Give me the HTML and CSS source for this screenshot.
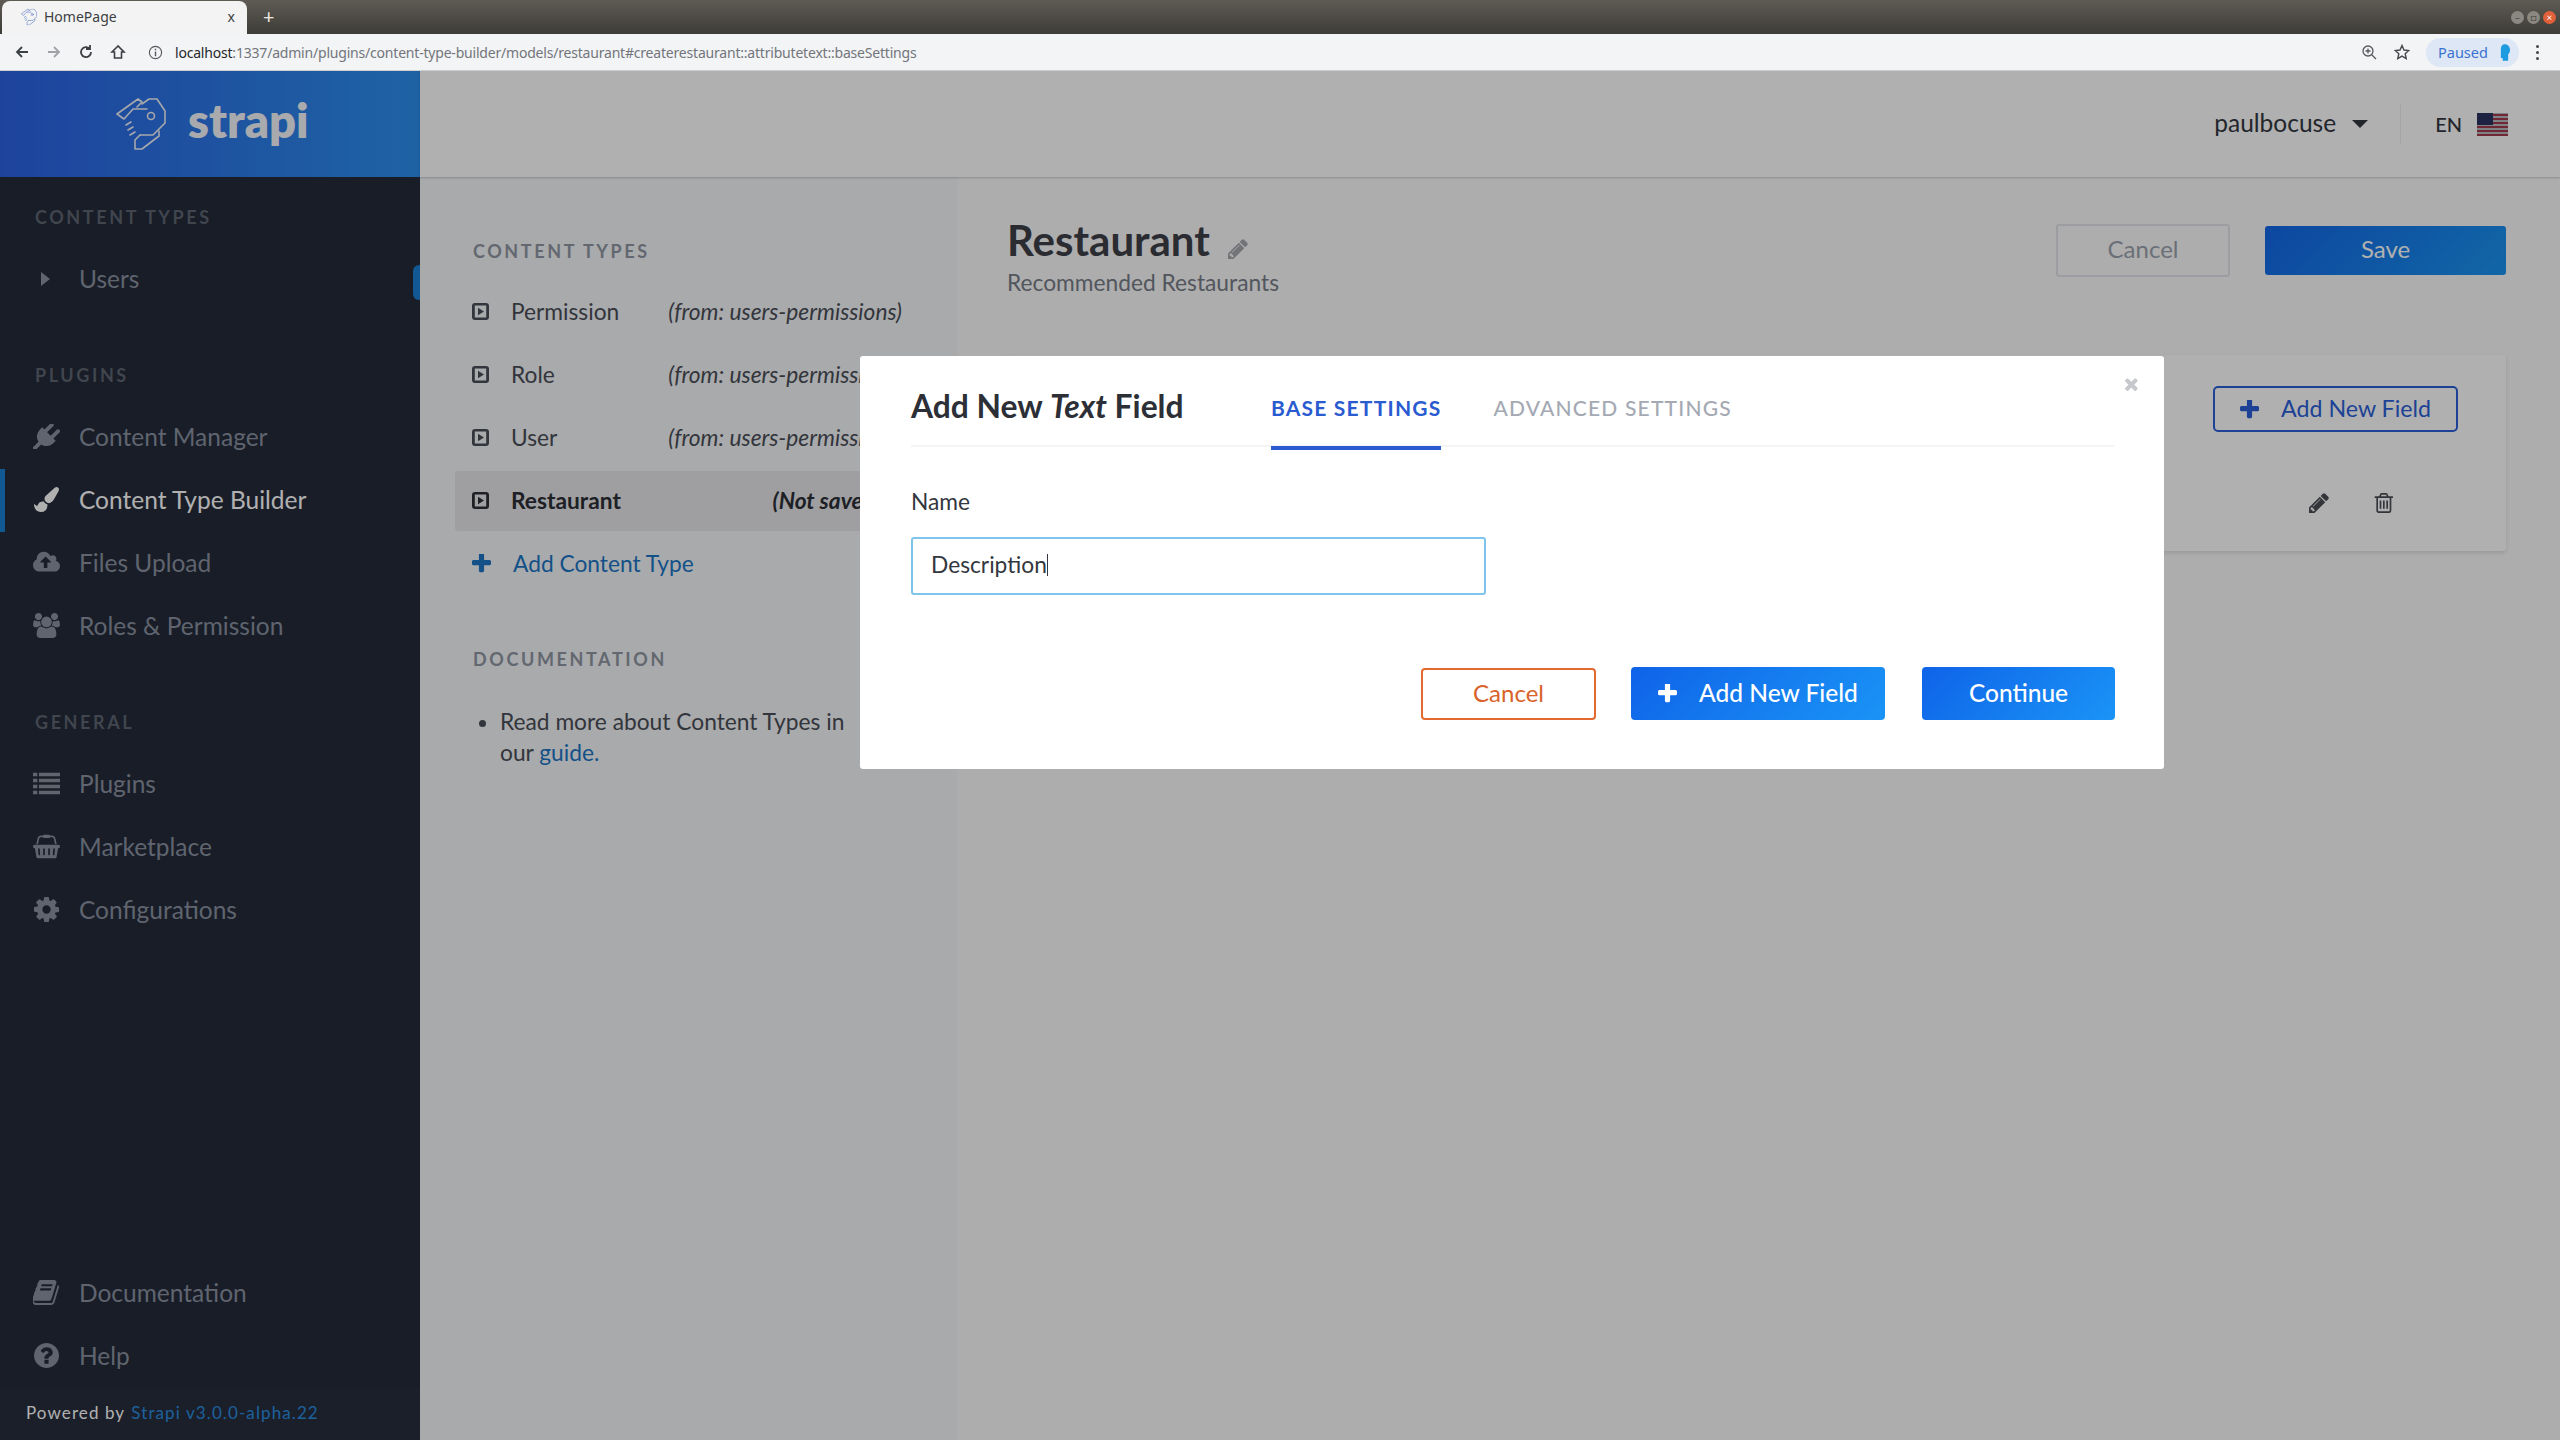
FILE: index.html
```html
<!DOCTYPE html>
<html lang="en">
<head>
    <meta charset="UTF-8">
    <title>HomePage</title>
    <link rel="stylesheet" href="styles.css">
</head>
<body>
    <svg class="sprite" xmlns="http://www.w3.org/2000/svg">
        <symbol id="i-plus" viewBox="192 192 1408 1408"><path d="M1600 736v192q0 40-28 68t-68 28h-416v416q0 40-28 68t-68 28h-192q-40 0-68-28t-28-68v-416h-416q-40 0-68-28t-28-68v-192q0-40 28-68t68-28h416v-416q0-40 28-68t68-28h192q40 0 68 28t28 68v416h416q40 0 68 28t28 68z"/></symbol>
        <symbol id="i-times" viewBox="238 238 1252 1316"><path d="M1490 1322q0 40-28 68l-136 136q-28 28-68 28t-68-28l-294-294-294 294q-28 28-68 28t-68-28l-136-136q-28-28-28-68t28-68l294-294-294-294q-28-28-28-68t28-68l136-136q28-28 68-28t68 28l294 294 294-294q28-28 68-28t68 28l136 136q28 28 28 68t-28 68l-294 294 294 294q28 28 28 68z"/></symbol>
        <symbol id="i-pencil" viewBox="128 128 1536 1536"><path d="M491 1536l91-91-235-235-91 91v107h128v128h107zm523-928q0-22-22-22-10 0-17 7l-542 542q-7 7-7 17 0 22 22 22 10 0 17-7l542-542q7-7 7-17zm-54-192l416 416-832 832h-416v-416zm683 96q0 53-37 90l-166 166-416-416 166-165q36-38 90-38 53 0 91 38l235 234q37 39 37 91z"/></symbol>
        <symbol id="i-trash" viewBox="128 128 1408 1536"><path d="M704 736v576q0 14-9 23t-23 9h-64q-14 0-23-9t-9-23v-576q0-14 9-23t23-9h64q14 0 23 9t9 23zm256 0v576q0 14-9 23t-23 9h-64q-14 0-23-9t-9-23v-576q0-14 9-23t23-9h64q14 0 23 9t9 23zm256 0v576q0 14-9 23t-23 9h-64q-14 0-23-9t-9-23v-576q0-14 9-23t23-9h64q14 0 23 9t9 23zm128 724v-948h-896v948q0 22 7 40.5t14.5 27 10.5 8.5h832q3 0 10.5-8.5t14.5-27 7-40.5zm-672-1076h448l-48-117q-7-9-17-11h-317q-10 2-17 11zm928 32v64q0 14-9 23t-23 9h-96v948q0 83-47 143.5t-113 60.5h-832q-66 0-113-58.5t-47-141.5v-952h-96q-14 0-23-9t-9-23v-64q0-14 9-23t23-9h309l70-167q15-37 54-63t79-26h320q40 0 79 26t54 63l70 167h309q14 0 23 9t9 23z"/></symbol>
        <symbol id="i-plug" viewBox="0 128 1792 1536"><path d="M1755 453q37 38 37 90.5t-37 90.5l-401 400 150 150-160 160q-163 163-389.5 186.5t-411.5-100.5l-362 362h-181v-181l362-362q-124-185-100.5-411.5t186.5-389.5l160-160 150 150 400-401q38-37 91-37t90 37 37 90.5-37 90.5l-400 401 234 234 401-400q38-37 91-37t90 37z"/></symbol>
        <symbol id="i-brush" viewBox="0 0 1792 1792"><path d="M1615 0q70 0 122.5 46.5t52.5 116.5q0 63-45 151-332 629-465 752-97 91-218 91-126 0-216.5-92.5t-90.5-219.5q0-128 92-212l638-579q59-54 130-54zm-909 1034q39 76 106.5 130t150.5 76l1 71q4 213-129.5 347t-348.5 134q-123 0-218-46.5t-152.5-127.5-86.5-183-29-220q7 5 41 30t62 44.5 59 36.5 46 17q41 0 55-37 25-66 57.5-112.5t69.5-76 88-47.5 103-25.5 125-10.5z"/></symbol>
        <symbol id="i-cloud" viewBox="0 256 1920 1280"><path d="M1280 864q0-14-9-23l-352-352q-9-9-23-9t-23 9l-351 351q-10 12-10 24 0 14 9 23t23 9h224v352q0 13 9.5 22.5t22.5 9.5h192q13 0 22.5-9.5t9.5-22.5v-352h224q13 0 22.5-9.5t9.5-22.5zm640 288q0 159-112.5 271.5t-271.5 112.5h-1088q-185 0-316.5-131.5t-131.5-316.5q0-130 70-240t188-165q-2-30-2-43 0-212 150-362t362-150q156 0 285.5 87t188.5 231q71-62 166-62 106 0 181 75t75 181q0 76-41 138 130 31 213.5 135.5t83.5 238.5z"/></symbol>
        <symbol id="i-users" viewBox="0 0 1920 1792"><path d="M593 896q-162 5-265 128h-134q-82 0-138-40.5t-56-118.5q0-353 124-353 6 0 43.5 21t97.5 42.5 119 21.5q67 0 133-23-5 37-5 66 0 139 81 256zm1071 637q0 120-73 189.5t-194 69.5h-874q-121 0-194-69.5t-73-189.5q0-53 3.5-103.5t14-109 26.5-108.5 43-97.5 62-81 85.5-53.5 111.5-20q10 0 43 21.5t73 48 107 48 135 21.5 135-21.5 107-48 73-48 43-21.5q61 0 111.5 20t85.5 53.5 62 81 43 97.5 26.5 108.5 14 109 3.5 103.5zm-1024-1277q0 106-75 181t-181 75-181-75-75-181 75-181 181-75 181 75 75 181zm704 384q0 159-112.5 271.5t-271.5 112.5-271.5-112.5-112.5-271.5 112.5-271.5 271.5-112.5 271.5 112.5 112.5 271.5zm576 225q0 78-56 118.5t-138 40.5h-134q-103-123-265-128 81-117 81-256 0-29-5-66 66 23 133 23 59 0 119-21.5t97.5-42.5 43.5-21q124 0 124 353zm-128-609q0 106-75 181t-181 75-181-75-75-181 75-181 181-75 181 75 75 181z"/></symbol>
        <symbol id="i-list" viewBox="0 0 25 20"><path d="M0 0h4v3.2H0zM0 5.6h4v3.2H0zM0 11.2h4v3.2H0zM0 16.8h4V20H0zM5.5 0H25v3.2H5.5zM5.5 5.6H25v3.2H5.5zM5.5 11.2H25v3.2H5.5zM5.5 16.8H25V20H5.5z"/></symbol>
        <symbol id="i-basket" viewBox="0 0 2048 1792"><path d="M1920 768q53 0 90.5 37.5t37.5 90.5-37.5 90.5-90.5 37.5h-15l-115 662q-8 46-44 76t-82 30h-1280q-46 0-82-30t-44-76l-115-662h-15q-53 0-90.5-37.5t-37.5-90.5 37.5-90.5 90.5-37.5h1792zm-1435 800q26-2 43.5-22.5t15.5-46.5l-32-416q-2-26-22.5-43.5t-46.5-15.5-43.5 22.5-15.5 46.5l32 416q2 25 20.5 42t43.5 17h5zm411-64v-416q0-26-19-45t-45-19-45 19-19 45v416q0 26 19 45t45 19 45-19 19-45zm384 0v-416q0-26-19-45t-45-19-45 19-19 45v416q0 26 19 45t45 19 45-19 19-45zm352 5l32-416q2-26-15.5-46.5t-43.5-22.5-46.5 15.5-22.5 43.5l-32 416q-2 26 15.5 46.5t43.5 22.5h5q25 0 43.5-17t20.5-42zm-1156-1217l-93 412h-132l101-441q19-88 89-143.5t160-55.5h167q0-26 19-45t45-19h384q26 0 45 19t19 45h167q90 0 160 55.5t89 143.5l101 441h-132l-93-412q-11-44-45.5-72t-79.5-28h-167q0 26-19 45t-45 19h-384q-26 0-45-19t-19-45h-167q-45 0-79.5 28t-45.5 72z"/></symbol>
        <symbol id="i-cog" viewBox="128 128 1536 1536"><path d="M1152 896q0-106-75-181t-181-75-181 75-75 181 75 181 181 75 181-75 75-181zm512-109v222q0 12-8 23t-20 13l-185 28q-19 54-39 91 35 50 107 138 10 12 10 25t-9 23q-27 37-99 108t-94 71q-12 0-26-9l-138-108q-44 23-91 38-16 136-29 186-7 28-36 28h-222q-14 0-24.5-8.5t-11.5-21.5l-28-184q-49-16-90-37l-141 107q-10 9-25 9-14 0-25-11-126-114-165-168-7-10-7-23 0-12 8-23 15-21 51-66.5t54-70.5q-27-50-41-99l-183-27q-13-2-21-12.5t-8-23.5v-222q0-12 8-23t19-13l186-28q14-46 39-92-40-57-107-138-10-12-10-24 0-10 9-23 26-36 98.5-107.5t94.5-71.5q13 0 26 10l138 107q44-23 91-38 16-136 29-186 7-28 36-28h222q14 0 24.5 8.5t11.5 21.5l28 184q49 16 90 37l142-107q9-9 24-9 13 0 25 10 129 119 165 170 7 8 7 22 0 12-8 23-15 21-51 66.5t-54 70.5q26 50 41 98l183 28q13 2 21 12.5t8 23.5z"/></symbol>
        <symbol id="i-book" viewBox="128 128 1536 1536"><path d="M1639 478q40 57 18 129l-275 906q-19 64-76.5 107.5t-122.5 43.5h-923q-77 0-148.5-53.5t-99.5-131.5q-24-67-2-127 0-4 3-27t4-37q1-8-3-21.5t-3-19.5q2-11 8-21t16.5-23.5 16.5-23.5q23-38 45-91.5t30-91.5q3-10 .5-30t-.5-28q3-11 17-28t17-23q21-36 42-92t25-90q1-9-2.5-32t.5-28q4-13 22-30.5t22-22.5q19-26 42.5-84.5t27.5-96.5q1-8-3-25.5t-2-26.5q2-8 9-18t18-23 17-21q8-12 16.5-30.5t15-35 16-36 19.5-32 26.5-23.5 36-11.5 47.5 5.5l-1 3q38-9 51-9h761q74 0 114 56t18 130l-274 906q-36 119-71.5 153.5t-128.5 34.5h-869q-27 0-38 15-11 16-1 43 24 70 144 70h923q29 0 56-15.5t35-41.5l300-987q7-22 5-57 38 15 59 43zm-1064 2q-4 13 2 22.5t20 9.5h608q13 0 25.5-9.5t16.5-22.5l21-64q4-13-2-22.5t-20-9.5h-608q-13 0-25.5 9.5t-16.5 22.5zm-83 256q-4 13 2 22.5t20 9.5h608q13 0 25.5-9.5t16.5-22.5l21-64q4-13-2-22.5t-20-9.5h-608q-13 0-25.5 9.5t-16.5 22.5z"/></symbol>
        <symbol id="i-help" viewBox="128 128 1536 1536"><path d="M1024 1376v-192q0-14-9-23t-23-9h-192q-14 0-23 9t-9 23v192q0 14 9 23t23 9h192q14 0 23-9t9-23zm256-672q0-88-55.5-163t-138.5-116-170-41q-243 0-371 213-15 24 8 42l132 100q7 6 19 6 16 0 25-12 53-68 86-92 34-24 86-24 48 0 85.5 26t37.5 59q0 38-20 61t-68 45q-63 28-115.5 86.5t-52.5 125.5v36q0 14 9 23t23 9h192q14 0 23-9t9-23q0-19 21.5-49.5t54.5-49.5q32-18 49-28.5t46-35 44.5-48 28-60.5 12.5-81zm384 192q0 209-103 385.5t-279.5 279.5-385.5 103-385.5-103-279.5-279.5-103-385.5 103-385.5 279.5-279.5 385.5-103 385.5 103 279.5 279.5 103 385.5z"/></symbol>
        <symbol id="i-type" viewBox="0 0 17 17"><path fill-rule="evenodd" d="M3 0h11a3 3 0 0 1 3 3v11a3 3 0 0 1-3 3H3a3 3 0 0 1-3-3V3a3 3 0 0 1 3-3zm-.2 2.600v11.800h11.400V2.600zM6 4.800l6 3.700-6 3.700z"/></symbol>
        <symbol id="i-logo" viewBox="0 0 50 52"><g fill="none" stroke="currentColor" stroke-width="1.6" stroke-linejoin="round" stroke-linecap="round"><path d="M22 1L1 16l7 5 9-10h14M22 1l4 3-5 5"/><path d="M26 6l7-5h8l8 12v12L37 37H24"/><circle cx="35" cy="18" r="3.500"/><path d="M24 37l-5 5v9h7l17-13v-5"/><path d="M10 27l5-3M12 32l5-3M14 37l5-3"/></g></symbol>
    </svg>

    <div class="tabbar">
        <div class="tab">
            <svg class="tab-icon" viewBox="0 0 50 52"><use href="#i-logo"/></svg>
            <span class="tab-title">HomePage</span>
            <span class="tab-close">x</span>
        </div>
        <span class="tab-new">+</span>
        <div class="window-btns">
            <span class="win-btn">&#8211;</span>
            <span class="win-btn">&#9633;</span>
            <span class="win-btn win-close">&#215;</span>
        </div>
    </div>

    <div class="toolbar">
        <svg class="nav-icon" viewBox="0 0 16 16"><path d="M14 8H3M8 3L3 8l5 5" fill="none" stroke="#3c3f43" stroke-width="1.8"/></svg>
        <svg class="nav-icon" viewBox="0 0 16 16"><path d="M2 8h11M8 3l5 5-5 5" fill="none" stroke="#a0a2a5" stroke-width="1.8"/></svg>
        <svg class="nav-icon" viewBox="0 0 16 16"><path d="M13 8a5 5 0 1 1-1.500-3.500M12 1v4H8" fill="none" stroke="#3c3f43" stroke-width="1.8"/></svg>
        <svg class="nav-icon" viewBox="0 0 16 16"><path d="M8 2L2 8h2.500v6h7V8H14z" fill="none" stroke="#3c3f43" stroke-width="1.6"/></svg>
        <div class="url">
            <svg class="url-info" viewBox="0 0 16 16"><circle cx="8" cy="8" r="6.500" fill="none" stroke="#55585c" stroke-width="1.2"/><path d="M8 7v5M8 4v1.600" stroke="#55585c" stroke-width="1.5"/></svg>
            <span class="url-host">localhost</span><span class="url-rest">:1337/admin/plugins/content-type-builder/models/restaurant#createrestaurant::attributetext::baseSettings</span>
        </div>
        <svg class="tool-icon" viewBox="0 0 16 16"><circle cx="7" cy="7" r="5" fill="none" stroke="#55585c" stroke-width="1.3"/><path d="M10.500 10.500L15 15M7 4.500v5M4.500 7h5" stroke="#55585c" stroke-width="1.3"/></svg>
        <svg class="tool-icon" viewBox="0 0 16 16"><path d="M8 1.500l2 4.500 4.800.5-3.600 3.200 1 4.800L8 12.100l-4.200 2.400 1-4.800L1.200 6.500 6 6z" fill="none" stroke="#45484c" stroke-width="1.4"/></svg>
        <div class="paused">
            <span>Paused</span>
            <svg class="paused-icon" viewBox="0 0 12 18"><path d="M6 0c4 0 6 3 6 6 0 3-1 4-2 5v7H4v-3H2V5c0-3 2-5 4-5z" fill="#1d9be0"/></svg>
        </div>
        <div class="kebab"><i></i><i></i><i></i></div>
    </div>

    <div class="app">
        <aside class="sidebar">
            <div class="brand">
                <svg class="brand-icon"><use href="#i-logo"/></svg>
                <span class="brand-name">strapi</span>
            </div>
            <nav class="nav">
                <h3 class="nav-heading">Content Types</h3>
                <a class="nav-item">
                    <span class="nav-caret"></span>
                    Users
                </a>
                <span class="nav-handle"></span>

                <h3 class="nav-heading nav-gap">Plugins</h3>
                <a class="nav-item"><svg class="nav-svg"><use href="#i-plug"/></svg>Content Manager</a>
                <a class="nav-item active"><svg class="nav-svg"><use href="#i-brush"/></svg>Content Type Builder</a>
                <a class="nav-item"><svg class="nav-svg"><use href="#i-cloud"/></svg>Files Upload</a>
                <a class="nav-item"><svg class="nav-svg"><use href="#i-users"/></svg>Roles &amp; Permission</a>

                <h3 class="nav-heading nav-gap">General</h3>
                <a class="nav-item"><svg class="nav-svg"><use href="#i-list"/></svg>Plugins</a>
                <a class="nav-item"><svg class="nav-svg"><use href="#i-basket"/></svg>Marketplace</a>
                <a class="nav-item"><svg class="nav-svg"><use href="#i-cog"/></svg>Configurations</a>

                <div class="nav-bottom">
                    <a class="nav-item"><svg class="nav-svg"><use href="#i-book"/></svg>Documentation</a>
                    <a class="nav-item"><svg class="nav-svg"><use href="#i-help"/></svg>Help</a>
                </div>
            </nav>
            <div class="powered">Powered by <span class="powered-link">Strapi v3.0.0-alpha.22</span></div>
        </aside>

        <div class="main">
            <header class="topbar">
                <span class="user">paulbocuse</span>
                <span class="user-caret"></span>
                <span class="topbar-sep"></span>
                <span class="lang">EN</span>
                <svg class="flag" viewBox="0 0 31 23">
                    <rect width="31" height="23" fill="#b8bcc4"/>
                    <path d="M0 1h31v2H0zM0 5h31v2H0zM0 9h31v2H0zM0 13h31v2H0zM0 17h31v2H0zM0 21h31v2H0z" fill="#a23a4c"/>
                    <rect width="16" height="12" fill="#2b3160"/>
                </svg>
            </header>

            <div class="body">
                <section class="left-panel">
                    <h3 class="panel-heading">Content Types</h3>
                    <ul class="type-list">
                        <li class="type-row"><svg class="type-icon"><use href="#i-type"/></svg><span>Permission</span><em class="type-from">(from: users-permissions)</em></li>
                        <li class="type-row"><svg class="type-icon"><use href="#i-type"/></svg><span>Role</span><em class="type-from">(from: users-permissions)</em></li>
                        <li class="type-row"><svg class="type-icon"><use href="#i-type"/></svg><span>User</span><em class="type-from">(from: users-permissions)</em></li>
                        <li class="type-row current"><svg class="type-icon"><use href="#i-type"/></svg><span>Restaurant</span><em class="type-from">(Not saved)</em></li>
                    </ul>
                    <a class="add-type"><svg class="add-type-icon"><use href="#i-plus"/></svg>Add Content Type</a>
                    <h3 class="panel-heading doc-heading">Documentation</h3>
                    <ul class="doc-list">
                        <li>Read more about Content Types in our <a class="doc-link">guide.</a></li>
                    </ul>
                </section>

                <section class="content">
                    <div class="page-head">
                        <div>
                            <h1 class="page-title">Restaurant <svg class="title-pencil"><use href="#i-pencil"/></svg></h1>
                            <p class="page-sub">Recommended Restaurants</p>
                        </div>
                        <div class="page-actions">
                            <button class="btn btn-ghost">Cancel</button>
                            <button class="btn btn-save">Save</button>
                        </div>
                    </div>
                    <div class="card">
                        <button class="btn btn-outline"><svg class="btn-plus"><use href="#i-plus"/></svg>Add New Field</button>
                        <div class="row-actions">
                            <svg class="row-icon"><use href="#i-pencil"/></svg>
                            <svg class="row-icon"><use href="#i-trash"/></svg>
                        </div>
                    </div>
                </section>
            </div>
        </div>

        <div class="overlay">
            <div class="modal">
                <svg class="modal-close"><use href="#i-times"/></svg>
                <div class="modal-head">
                    <h2 class="modal-title">Add New <em>Text</em> Field</h2>
                    <span class="modal-tab selected">Base Settings</span>
                    <span class="modal-tab">Advanced Settings</span>
                </div>
                <label class="field-label" for="name">Name</label>
                <div class="field-input" id="name">Description<span class="cursor"></span></div>
                <div class="modal-actions">
                    <button class="btn btn-cancel">Cancel</button>
                    <button class="btn btn-primary btn-add"><svg class="btn-plus"><use href="#i-plus"/></svg>Add New Field</button>
                    <button class="btn btn-primary btn-continue">Continue</button>
                </div>
            </div>
        </div>
    </div>
</body>
</html>
```

FILE: styles.css
```css
* {
    box-sizing: border-box;
}

html, body {
    margin: 0;
    padding: 0;
    height: 100%;
    overflow: hidden;
}

body {
    display: flex;
    flex-direction: column;
    font-family: 'Lato', 'Open Sans', sans-serif;
    font-size: 22.75px;
    color: #3d4049;
    background-color: #fbfbfb;
    text-rendering: optimizeLegibility;
}

h1, h2, h3, p, ul {
    margin: 0;
    padding: 0;
}

svg {
    fill: currentColor;
}

.sprite {
    width: 0;
    height: 0;
    position: absolute;
}

/* browser chrome */
.tabbar {
    height: 34px;
    display: flex;
    align-items: flex-end;
    padding-left: 2px;
    background: linear-gradient(#5e5b54, #3e3c37);
}

.tab {
    width: 245px;
    height: 33px;
    display: flex;
    align-items: center;
    padding: 0 12px 2px 19px;
    border-radius: 8px 8px 0 0;
    background-color: #f3f3f3;
    color: #3c3f43;
    font-family: 'Noto Sans', sans-serif;
    font-size: 14px;
}

.tab-icon {
    width: 16px;
    height: 20px;
    color: #4468c0;
    margin-right: 7px;
}

.tab-close {
    margin-left: auto;
    font-size: 14px;
}

.tab-new {
    align-self: center;
    margin-left: 16px;
    color: #ece9e2;
    font-family: 'Noto Sans', sans-serif;
    font-size: 20px;
    line-height: 34px;
}

.window-btns {
    margin-left: auto;
    align-self: center;
    display: flex;
    gap: 3px;
    padding-right: 4px;
}

.win-btn {
    width: 13px;
    height: 13px;
    border-radius: 50%;
    background-color: #8a8880;
    color: #3e3c37;
    font-size: 10px;
    line-height: 13px;
    text-align: center;
}

.win-close {
    background-color: #e0603a;
    color: #fff;
}

.toolbar {
    height: 37px;
    display: flex;
    align-items: center;
    padding-left: 14px;
    background-color: #f3f4f6;
    border-bottom: 1px solid #cfcfcf;
    font-family: 'Noto Sans', sans-serif;
}

.nav-icon {
    width: 16px;
    height: 16px;
    margin-right: 16px;
}

.url {
    flex: 1;
    display: flex;
    align-items: center;
    margin-left: 6px;
    font-size: 14px;
    letter-spacing: -0.2px;
}

.url-info {
    width: 15px;
    height: 15px;
    margin-right: 12px;
}

.url-host {
    color: #26282b;
}

.url-rest {
    color: #72767b;
}

.tool-icon {
    width: 16px;
    height: 16px;
    margin-right: 17px;
}

.paused {
    width: 93px;
    height: 29px;
    display: flex;
    align-items: center;
    justify-content: space-between;
    padding: 0 9px 0 12px;
    margin-left: -1px;
    border-radius: 15px;
    background-color: #dde7f5;
    color: #3a72d0;
    font-size: 14.5px;
}

.paused-icon {
    width: 11px;
    height: 17px;
}

.kebab {
    display: flex;
    flex-direction: column;
    gap: 3px;
    margin: 0 21px 0 17px;
}

.kebab i {
    width: 3px;
    height: 3px;
    background-color: #45484c;
    border-radius: 50%;
}

/* app */
.app {
    flex: 1;
    min-height: 0;
    display: flex;
    position: relative;
}

.sidebar {
    width: 420px;
    flex-shrink: 0;
    display: flex;
    flex-direction: column;
    background-color: #242a39;
}

.brand {
    height: 106px;
    display: flex;
    align-items: center;
    padding-left: 116px;
    background: linear-gradient(to right, #2c62e4, #2c8fee);
    color: #fff;
}

.brand-icon {
    width: 50px;
    height: 52px;
    margin-right: 22px;
    color: #f0f2f8;
}

.brand-name {
    font-size: 47px;
    font-weight: 800;
    line-height: 1;
    margin-top: -8px;
    color: #f4f6fb;
}

.nav {
    flex: 1;
    position: relative;
    display: flex;
    flex-direction: column;
    padding-top: 26px;
}

.nav-heading {
    height: 28px;
    line-height: 28px;
    margin-bottom: 17px;
    padding-left: 35px;
    font-size: 18px;
    font-weight: 700;
    letter-spacing: 2.6px;
    text-transform: uppercase;
    color: #5e6571;
}

.nav-gap {
    margin-top: 50px;
}

.nav-item {
    height: 63px;
    display: flex;
    align-items: center;
    padding-left: 33px;
    padding-bottom: 2px;
    font-size: 24.5px;
    color: #8a92a1;
}

.nav-item.active {
    color: #fff;
    box-shadow: inset 5px 0 0 #1b82d6;
}

.nav-svg {
    width: 27px;
    height: 25px;
    margin-right: 19px;
    flex-shrink: 0;
}

.nav-caret {
    width: 0;
    height: 0;
    margin: 0 29px 0 8px;
    border-left: 9px solid currentColor;
    border-top: 7px solid transparent;
    border-bottom: 7px solid transparent;
}

.nav-handle {
    position: absolute;
    top: 88px;
    right: 0;
    width: 7px;
    height: 35px;
    border-radius: 6px 0 0 6px;
    background-color: #1b82d6;
}

.nav-bottom {
    margin-top: auto;
}

.powered {
    height: 52px;
    display: flex;
    align-items: center;
    gap: 1px;
    padding-left: 26px;
    padding-bottom: 4px;
    background-color: #272d3c;
    color: #fff;
    font-size: 17px;
    letter-spacing: 1.1px;
    white-space: pre;
}

.powered-link {
    color: #2a8de0;
}

.main {
    flex: 1;
    display: flex;
    flex-direction: column;
    min-width: 0;
}

.topbar {
    height: 106px;
    flex-shrink: 0;
    display: flex;
    align-items: center;
    justify-content: flex-end;
    padding-right: 52px;
    background-color: #fff;
    box-shadow: 0 1px 2px rgba(0, 0, 0, 0.2);
    position: relative;
    color: #333740;
}

.user {
    font-size: 24.5px;
    padding-bottom: 3px;
}

.user-caret {
    width: 0;
    height: 0;
    margin: 0 32px 0 16px;
    border-top: 8px solid currentColor;
    border-left: 8px solid transparent;
    border-right: 8px solid transparent;
}

.topbar-sep {
    width: 1px;
    height: 40px;
    margin-right: 34px;
    background-color: #f0f0f0;
}

.lang {
    font-size: 20px;
    font-weight: 500;
    margin-right: 15px;
}

.flag {
    width: 31px;
    height: 23px;
}

.body {
    flex: 1;
    display: flex;
    min-height: 0;
}

.left-panel {
    width: 537px;
    flex-shrink: 0;
    padding: 60px 38px 0 35px;
    background-color: #f5f6f9;
}

.panel-heading {
    height: 28px;
    line-height: 28px;
    margin-bottom: 17px;
    padding-left: 18px;
    font-size: 18px;
    font-weight: 700;
    letter-spacing: 2.6px;
    text-transform: uppercase;
    color: #9097a3;
}

.type-list {
    list-style: none;
    display: flex;
    flex-direction: column;
    gap: 3px;
}

.type-row {
    height: 60px;
    width: 464px;
    display: flex;
    align-items: center;
    padding: 0 17px 2px;
    border-radius: 3px;
    white-space: nowrap;
    color: #4a4e57;
}

.type-row.current {
    background-color: #e6e7ea;
    font-weight: 700;
    color: #2c2f36;
}

.type-row.current .type-from {
    margin-right: 21px;
}

.type-icon {
    width: 17px;
    height: 17px;
    margin-right: 22px;
    flex-shrink: 0;
}

.type-from {
    margin-left: auto;
    font-style: italic;
}

.add-type {
    height: 60px;
    display: flex;
    align-items: center;
    padding-left: 17px;
    padding-bottom: 2px;
    margin-top: 3px;
    color: #1c76c6;
}

.add-type-icon {
    width: 19px;
    height: 19px;
    margin-right: 22px;
}

.doc-heading {
    margin-top: 51px;
    margin-bottom: 33px;
}

.doc-list {
    width: 390px;
    padding-left: 45px;
    line-height: 31px;
    color: #4a4e57;
}

.doc-link {
    color: #1c76c6;
}

.content {
    flex: 1;
    padding: 38px 54px 0 50px;
    min-width: 0;
}

.page-head {
    display: flex;
    justify-content: space-between;
    align-items: flex-start;
}

.page-title {
    font-size: 42px;
    font-weight: 700;
    line-height: 50px;
    color: #3d4049;
}

.title-pencil {
    width: 20px;
    height: 20px;
    margin-left: 8px;
    color: #a5a8ae;
    vertical-align: -3px;
}

.page-sub {
    margin-top: 3px;
    font-size: 22.75px;
    line-height: 30px;
    color: #787d88;
}

.page-actions {
    display: flex;
    align-items: center;
    gap: 35px;
    margin-top: 9px;
}

.btn {
    display: flex;
    align-items: center;
    justify-content: center;
    font-family: inherit;
    font-size: 24px;
    border: none;
    border-radius: 3px;
    padding: 0 0 3px;
}

.btn-ghost {
    width: 174px;
    height: 53px;
    padding-bottom: 5px;
    border: 2px solid #e2e4e9;
    background: transparent;
    color: #9ba2ae;
}

.btn-save {
    width: 241px;
    height: 49px;
    padding-bottom: 5px;
    background: linear-gradient(135deg, #1367e8, #1a95f2);
    color: #fff;
}

.card {
    margin-top: 57px;
    height: 196px;
    display: flex;
    flex-direction: column;
    align-items: flex-end;
    padding: 31px 48px 0 0;
    border-radius: 3px;
    background-color: #fff;
    box-shadow: 0 2px 4px rgba(0, 0, 0, 0.12);
}

.btn-outline {
    width: 245px;
    height: 46px;
    border: 2px solid #2a60d8;
    border-radius: 5px;
    background: transparent;
    color: #2a60d8;
    font-size: 23.2px;
}

.btn-plus {
    width: 19px;
    height: 19px;
    margin-right: 22px;
    margin-top: 3px;
}

.row-actions {
    display: flex;
    gap: 44px;
    margin-top: 61px;
    margin-right: 65px;
}

.row-icon {
    width: 20px;
    height: 20px;
    color: #4a4d54;
}

/* dimmed layer and dialog */
.overlay {
    position: absolute;
    inset: 0;
    padding: 285px 0 0 860px;
    background-color: rgba(0, 0, 0, 0.31);
}

.modal {
    position: relative;
    width: 1304px;
    height: 413px;
    padding: 0 49px 0 51px;
    border-radius: 3px;
    background-color: #fff;
}

.modal-close {
    position: absolute;
    top: 21px;
    right: 26px;
    width: 14px;
    height: 14px;
    color: #c6c8cc;
}

.modal-head {
    height: 91px;
    display: flex;
    align-items: flex-end;
    border-bottom: 2px solid #f4f4f4;
    margin-right: 1px;
}

.modal-title {
    width: 360px;
    align-self: flex-start;
    margin-top: 30px;
    font-size: 31.8px;
    font-weight: 700;
    line-height: 40px;
    color: #2c2f36;
}

.modal-title em {
    font-style: italic;
}

.modal-tab {
    height: 57px;
    margin-right: 52px;
    margin-bottom: -5px;
    font-size: 21px;
    font-weight: 500;
    letter-spacing: 1.2px;
    line-height: 30px;
    text-transform: uppercase;
    color: #a4a9b3;
}

.modal-tab.selected {
    font-weight: 700;
    color: #2a5bd0;
    border-bottom: 4px solid #2a5bd0;
}

.field-label {
    display: block;
    margin-top: 40px;
    font-size: 22.75px;
    line-height: 30px;
    color: #333740;
}

.field-input {
    width: 575px;
    height: 58px;
    margin-top: 20px;
    padding: 0 0 3px 18px;
    display: flex;
    align-items: center;
    border: 2px solid #7fc4ea;
    border-radius: 3px;
    color: #333740;
    font-size: 22.75px;
}

.cursor {
    width: 1px;
    height: 22px;
    background-color: #333740;
}

.modal-actions {
    display: flex;
    justify-content: flex-end;
    align-items: center;
    margin-top: 72px;
}

.btn-cancel {
    width: 175px;
    height: 52px;
    margin-right: 35px;
    border: 2px solid #e26a2e;
    border-radius: 4px;
    background: #fff;
    color: #d9622b;
}

.btn-primary {
    height: 53px;
    background: linear-gradient(135deg, #0f63e8, #1a94f6);
    border-radius: 4px;
    color: #fff;
    font-size: 24.5px;
    font-weight: 500;
}

.btn-add {
    width: 254px;
    margin-right: 37px;
}

.btn-continue {
    width: 193px;
}
```
